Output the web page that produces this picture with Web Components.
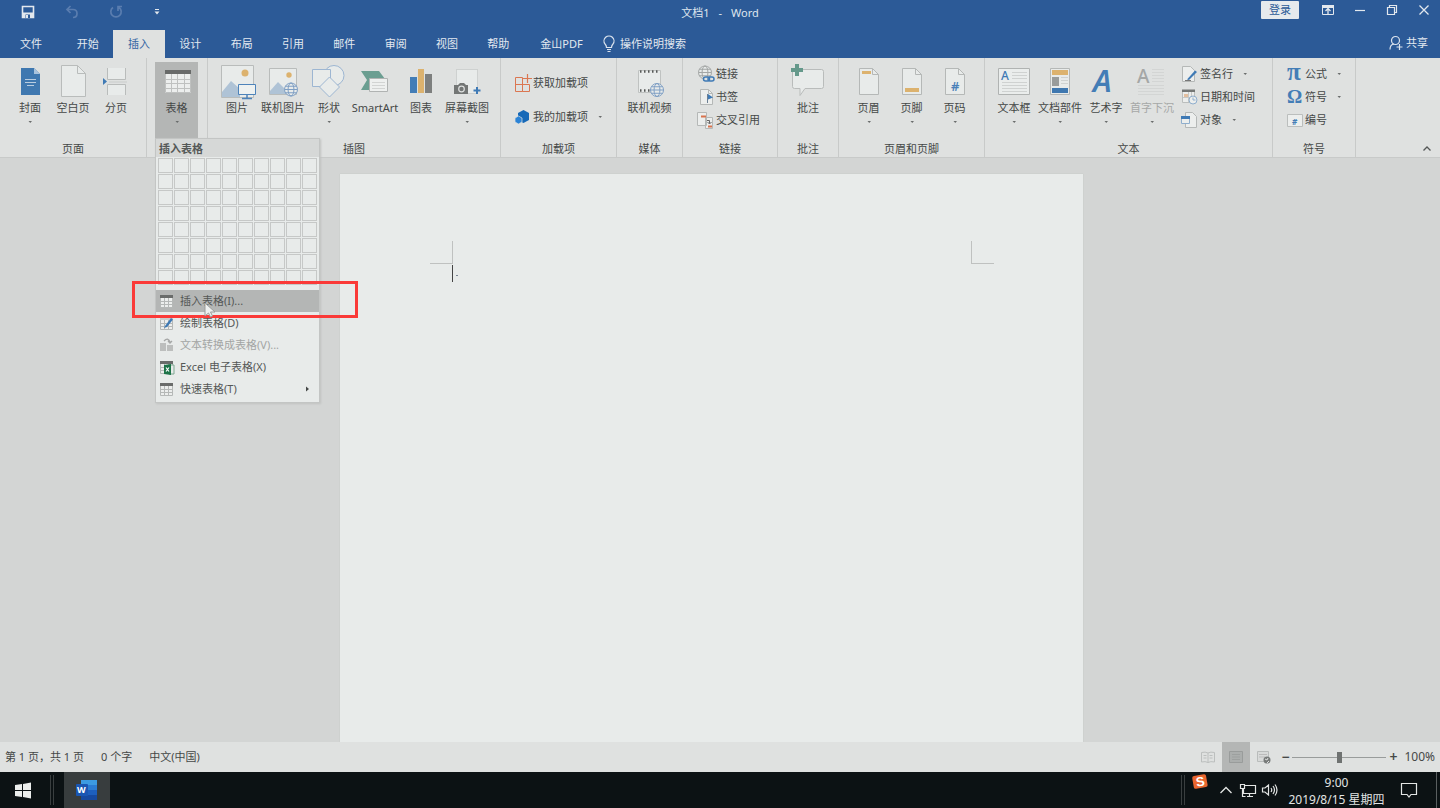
<!DOCTYPE html>
<html lang="zh-CN">
<head>
<meta charset="utf-8">
<title>文档1 - Word</title>
<style>
html, body { margin: 0; height: 100%; }
body { font: 11px/16px "Noto Sans", "Noto Sans CJK SC", sans-serif; color: #454847; overflow: hidden;
  --blue: #2c5a97; --ribbon: #dfe1e0; --canvas: #d3d5d4; --paper: #e8ebea; --line: #c8cac9; --accent: #3f7ab5; }
</style>
</head>
<body>
<word-app></word-app>
<script>
const globe = (x, y, r, c = '#7f9fc4') => `<g fill="#e8ebea" stroke="${c}"><circle cx="${x}" cy="${y}" r="${r}"/><ellipse cx="${x}" cy="${y}" rx="${r * .45}" ry="${r}" fill="none"/><path d="M${x - r} ${y}h${2 * r}M${x - r * .85} ${y - r * .5}h${r * 1.7}M${x - r * .85} ${y + r * .5}h${r * 1.7}" fill="none"/></g>`;
const sheet = '<path d="M10.5 4.5h13l6 6v20h-19z" fill="#e8ebea" stroke="#b5b8b7"/><path d="M23.5 4.5v6h6" fill="none" stroke="#b5b8b7"/>';
const miniTable = '<path d="M2 4h13v11H2z" fill="#eceeed"/><path d="M2.5 6v9.5h12V6M2 9.5h13M2 12.5h13M6.5 6v9M10.5 6v9" fill="none" stroke="#b5b8b7"/><path d="M2 3h13v3H2z" fill="#6a6c6b"/>';
const miniPage = '<path d="M3.500 1.500h8l4 4v11h-12z" fill="#eceeed" stroke="#b5b8b7"/><path d="M11.500 1.500v4h4" fill="none" stroke="#b5b8b7"/>';
const ICONS = {
  cover: [40, 36, '<path d="M11 4h13l6 6v21H11z" fill="#3f78b0"/><path d="M24 4v6h6z" fill="#a9c3dd"/><path d="M15 15.500h11M15 18.500h11M17 21.500h7" stroke="#b9cde0"/>'],
  blank: [40, 36, '<path d="M8.500 1.500h16l8 8v23h-24z" fill="#e8ebea" stroke="#b9bcbb"/><path d="M24.500 1.500v8h8" fill="none" stroke="#b9bcbb"/>'],
  break: [40, 36, '<path d="M11.500 4v11.500h18V4M11.500 31V20.500h18V31" fill="#e8ebea" stroke="#b9bcbb"/><path d="M13 18h18" stroke="#c9cccb"/><path d="M7 14l4 3.500-4 3.500z" fill="#3f7ab5"/>'],
  table: [40, 36, '<path d="M8 6h26v23H8z" fill="#eceeed"/><path d="M8.500 10v18.500h25V10M8 15.500h26M8 19.500h26M8 24.500h26M14.500 10v18M20.500 10v18M27.500 10v18" fill="none" stroke="#bfc1c0"/><path d="M8 6h26v4H8z" fill="#686a69"/>'],
  picture: [40, 36, '<path d="M4.500 1.500h32v32h-32z" fill="#e8ebea" stroke="#b9bcbb"/><circle cx="28" cy="9" r="3.500" fill="#dcb26e"/><path d="M5 33V28L14 17l9 8v8z" fill="#afc3d6"/><path d="M21.500 20.500h17v10h-17z" fill="#eef1f0" stroke="#4d83ba"/><path d="M30 31v3M25 34.500h10" stroke="#4d83ba" stroke-width="1.500"/>'],
  onlinepic: [40, 36, '<path d="M6.500 4.500h27v26h-27z" fill="#e8ebea" stroke="#b9bcbb"/><circle cx="26" cy="11" r="2.700" fill="#dcb26e"/><path d="M7 30v-3l8-9 8 8v4z" fill="#afc3d6"/>' + globe(28, 25.5, 6.5)],
  shapes: [40, 36, '<g fill="#e8ebea" stroke="#9db6d2"><circle cx="25" cy="11.500" r="10"/><path d="M3.500 5.500h18v17h-18z"/><path d="M20.500 13l10 10-10 10-10-10z"/></g>'],
  smartart: [40, 36, '<path d="M6 7h18l6 8v5H14v6H6l6-10z" fill="#6b9e91"/><path d="M14.500 14.500h18v13h-18z" fill="#eef0ef" stroke="#b0b3b2"/><path d="M17 18.500h13M17 21.500h13M17 24.500h13" stroke="#d2d4d3"/>'],
  chart: [40, 36, '<path d="M9 13h7v16H9z" fill="#437db6"/><path d="M17 5h6v24h-6z" fill="#dcb26e"/><path d="M24 10h7v19h-7z" fill="#7d7f7e"/>'],
  screenshot: [40, 36, '<path d="M9.500 5.500h21v24h-21z" fill="#e8ebea" stroke="#b9bcbb" stroke-dasharray="1 1"/><path d="M7 21h4l2-2h4l2 2h2v9H7z" fill="#737675"/><circle cx="14.500" cy="25" r="2.800" fill="none" stroke="#dfe1e0" stroke-width="1.200"/><path d="M30 23v7M26.500 26.500h7" stroke="#3f7ab5" stroke-width="2"/>'],
  video: [40, 36, '<path d="M8.500 6.500h22v22h-22z" fill="#e8ebea" stroke="#bfc2c1"/><path d="M10 7.500h20M10 26.500h12" stroke="#555857" stroke-width="2.500" stroke-dasharray="1.500 2.500"/>' + globe(27, 26, 6.5)],
  comment: [40, 36, '<path d="M6.500 5.500h27q2 0 2 2v15q0 2-2 2H17l-5 7v-7H6.500q-2 0-2-2v-15q0-2 2-2z" fill="#e8ebea" stroke="#b9bcbb"/><path d="M9 0v12M3 6h12" stroke="#65998b" stroke-width="4"/>'],
  header: [40, 36, sheet + '<path d="M13 7h9v3h-9z" fill="#dcb26e"/>'],
  footer: [40, 36, sheet + '<path d="M13 24h14v4H13z" fill="#dcb26e"/>'],
  pagenum: [40, 36, sheet + '<text x="16" y="27" font-size="13" font-weight="600" fill="#4a80b8">#</text>'],
  textbox: [40, 36, '<path d="M4.500 4.500h31v26h-31z" fill="#eaedec" stroke="#b0b3b2"/><path d="M18 8.500h15M18 11.500h15M18 14.500h15M8 18.500h25M8 21.500h25M8 24.500h25M8 27.500h25" stroke="#cfd2d1"/><text x="7" y="16" font-size="12" font-weight="500" fill="#3f7ab5">A</text>'],
  parts: [40, 36, '<path d="M10.500 4.500h19v26h-19z" fill="#e8ebea" stroke="#b5b8b7"/><path d="M12 6h16v5H12z" fill="#dcb26e"/><path d="M12 13h7v9h-7z" fill="#999c9b"/><path d="M21 13.500h7M21 16.500h7M21 19.500h7" stroke="#cfd2d1"/><path d="M12 24h16v5H12z" fill="#3f78b0"/>'],
  wordart: [40, 36, '<text x="7" y="28" font-size="31" font-style="italic" font-weight="600" fill="#437db6">A</text>'],
  dropcap: [40, 36, '<text x="5" y="19" font-size="19" font-weight="500" fill="#a5a7a6">A</text><path d="M20 5.500h12M20 8.500h12M20 11.500h12M20 14.500h12M20 17.500h12M6 21.500h26M6 24.500h26M6 27.500h26M6 30.500h26" stroke="#d3d5d4"/>'],
  getaddin: [18, 18, '<path d="M1.500 3.500h7v14h-7zM1.500 10.500h14v7h-7v-7" fill="none" stroke="#db7651"/><path d="M13.500 0v9M9 4.500h9" stroke="#db7651" stroke-width="1.200"/>'],
  myaddin: [18, 18, '<path d="M9.500 2l5.500 3v7l-5.500 3L4 12V5z" fill="#1669b8"/><path d="M4.500 8l3.500 2v4l-3.500 2L1 14v-4z" fill="#2b83d6" stroke="#dfe1e0" stroke-width=".7"/>'],
  link: [18, 18, globe(8, 7.5, 6.5, '#a3a6a5') + '<g fill="#dfe1e0" stroke="#3f7ab5" stroke-width="1.500"><rect x="6.500" y="12" width="6" height="4" rx="2"/><rect x="11" y="12" width="6" height="4" rx="2" fill="none"/></g>'],
  bookmark: [18, 18, miniPage + '<path d="M10.500 6v9" stroke="#6b7f93"/><path d="M11 6l5 3.500-5 2z" fill="#3f7ab5"/>'],
  xref: [18, 18, '<path d="M.500 1.500h9v13h-9zM8.500 6.500h7v11h-7z" fill="#eceeed" stroke="#b5b8b7"/><path d="M4 5.500h5M11 15.500h4" stroke="#d8734e" stroke-width="2"/><path d="M10 9.500h2.500v3m-2-1.500l2 2 2-2" fill="none" stroke="#666"/>'],
  sign: [18, 18, '<path d="M1.500 1.500h8l4 4v11h-12z" fill="#eceeed" stroke="#b5b8b7"/><path d="M6 14.500l8-9 2 1.500-8 8z" fill="#3f7ab5"/><path d="M4 15.500h6" stroke="#777"/>'],
  date: [18, 18, '<path d="M1.500 2.500h12v12h-12z" fill="#eceeed" stroke="#bbbebd"/><path d="M1 1.500h13v2.500H1z" fill="#747776"/><path d="M3 6h4v3H3z" fill="#e3bfa0"/><path d="M2 9.500h12M7.500 4v10M10.500 4v10" stroke="#c5c8c7"/><circle cx="12" cy="12" r="4" fill="#eceeed" stroke="#8faecd"/><path d="M12 9.500V12h2.500" fill="none" stroke="#8faecd"/>'],
  object: [18, 18, '<path d="M4.500 1.500h7l4 4v11h-11z" fill="#eceeed" stroke="#b5b8b7"/><path d="M0 5h9v8H0z" fill="#eceeed"/><path d="M.500 5.500h8v7h-8z" fill="none" stroke="#8faecd"/><path d="M0 5h9v3H0z" fill="#3f7ab5"/>'],
  pi: [18, 18, '<text class="serif" x="1" y="15" font-size="25" fill="#437db6">π</text>'],
  omega: [18, 18, '<text class="serif" x="1" y="15" font-size="19" fill="#437db6">Ω</text>'],
  number: [18, 18, '<path d="M1.500 3.500h15v12h-15z" fill="#eceeed" stroke="#bbbebd"/><text x="6" y="14" font-size="8" font-weight="700" font-style="italic" fill="#437db6">#</text>'],
  tbl: [18, 18, miniTable],
  draw: [18, 18, miniTable.replace('#6a6c6b', '#c9cccb') + '<path d="M7 12l6-8 2 1.500-6 7.500-3 1z" fill="#3f7ab5"/>'],
  convert: [18, 18, '<path d="M2 7h6v8H2zM9 9h6v6H9z" fill="#bcbebd"/><path d="M6 5q4-4 6 1m-2-1l2 2 2-2" fill="none" stroke="#a5a7a6" stroke-width="1.300"/>'],
  excel: [18, 18, miniTable + '<path d="M11 7h5v9h-5z" fill="#e8ebea" stroke="#7fa892"/><path d="M6 7l7-1v11l-7-1z" fill="#1c7348"/><path d="M8 9.500l3 4M11 9.500l-3 4" stroke="#fff" stroke-width="1.200"/>'],
  save: [14, 14, '<path d="M1.500 1.500h11v11h-11z" fill="none" stroke="#e3e8ee" stroke-width="1.600"/><path d="M2 7.500h10v5H2z" fill="#e3e8ee"/><path d="M4.500 9.500h4.500V13H4.500z" fill="#2c5a97"/><path d="M5 10h2v3H5z" fill="#e3e8ee"/>'],
  undo: [14, 14, '<path d="M5.500 1L2 4.500 5.500 8M2.500 4.500H8q4 0 4 4T8 12.500" fill="none" stroke="#5a7daf" stroke-width="1.700"/>'],
  redo: [14, 14, '<path d="M4 2.500A5.200 5.200 0 1 0 10 2.500M9 6V1.500h4" fill="none" stroke="#5a7daf" stroke-width="1.700"/>'],
  custom: [8, 8, '<path d="M2 1.500h4" stroke="#e3e8ee"/><path d="M1.500 3.500h5L4 6.500z" fill="#e3e8ee"/>'],
  ribbonopt: [14, 14, '<path d="M1.500 2.500h11v9h-11z" fill="none" stroke="#e3e8ee"/><path d="M1 2h12v3H1z" fill="#e3e8ee"/><path d="M7 11V6M4.500 8L7 5.500 9.500 8" fill="none" stroke="#e3e8ee" stroke-width="1.300"/>'],
  min: [14, 14, '<path d="M2 7.500h10" stroke="#e3e8ee" stroke-width="1.200"/>'],
  restore: [14, 14, '<path d="M2.500 4.500h7v7h-7zM4.500 4V2.500h7v7H10" fill="none" stroke="#e3e8ee" stroke-width="1.200"/>'],
  close: [14, 14, '<path d="M2.500 2.500l9 9M11.500 2.500l-9 9" stroke="#e3e8ee" stroke-width="1.300"/>'],
  person: [16, 16, '<circle cx="7.500" cy="5.500" r="4" fill="none" stroke="#dce4ee" stroke-width="1.200"/><path d="M2 14.500q0-5 4-5.500M11.500 9v6M8.500 12h6" fill="none" stroke="#dce4ee" stroke-width="1.200"/>'],
  bulb: [14, 18, '<path d="M4.500 12.500Q4.500 10.500 3 9a5 5 0 1 1 8 0Q9.500 10.500 9.500 12.500zM5 14.500h4M5.500 16.500h3" fill="none" stroke="#dce4ee" stroke-width="1.200"/>'],
  caret: [6, 4, '<path d="M1.500 1h3.500L3.250 3z" fill="#6a6d6c"/>'],
  up: [10, 8, '<path d="M1.500 5.500L5 2l3.500 3.500" fill="none" stroke="#555857" stroke-width="1.300"/>'],
  right: [6, 8, '<path d="M1 1.500l3 2.500-3 2.500z" fill="#454847"/>'],
  read: [14, 14, '<path d="M.500 2.500q4-1 6.500.500 2.500-1.500 6.500-.500v9.500q-4-1-6.500.500-2.500-1.500-6.500-.500zM7 3v10M2.500 5.500h3M2.500 8h3M8.500 5.500h3M8.500 8h3" fill="none" stroke="#bcbfbe"/>'],
  print: [14, 14, '<path d="M.500 1.500h13v11H.500z" fill="#abaead" stroke="#999c9b"/><path d="M3 4.500h8M3 7h8M3 9.500h8" stroke="#9da09f"/>'],
  web: [14, 14, '<path d="M.500 1.500h11v10H.500z" fill="#d8dad9" stroke="#b9bcbb"/><path d="M2 4.500h8M2 7h6" stroke="#bbb"/><circle cx="10" cy="10" r="3.500" fill="#777a79"/><path d="M8 9l2 1 1-2M10 13l2-2" stroke="#dfe1e0" fill="none"/>'],
  win: [18, 18, '<path d="M1 4l7-1v6H1zM9 3l8-1.500V9H9zM1 10h7v6l-7-1zM9 10h8v7.500L9 16z" fill="#eceeed"/>'],
  word: [24, 22, '<path d="M6 1h16v5H6z" fill="#3c9be2"/><path d="M6 6h16v5H6z" fill="#2b7cd3"/><path d="M6 11h16v5H6z" fill="#1d5fbe"/><path d="M6 16h16v5H6z" fill="#1649a0"/><rect x="1" y="5" width="12" height="12" rx="1" fill="#1a56b3"/><text x="2" y="14" font-size="9" font-weight="700" fill="#fff">W</text>'],
  sogou: [18, 18, '<g transform="rotate(-10 9 9)"><rect x="2" y="2" width="14" height="13" rx="2" fill="#e9662f"/><text class="sans" x="5" y="13" font-size="13" fill="#fff">S</text></g>'],
  tray: [14, 10, '<path d="M1.500 8L7 2.500 12.500 8" fill="none" stroke="#e3e5e4" stroke-width="1.300"/>'],
  net: [18, 14, '<path d="M5 2.500h11.500v8H4.500V6M8 13.500h6M10.500 11v2M1.500 1.500h4v4h-4zM3.500 6v7.500h3" fill="none" stroke="#e3e5e4" stroke-width="1.200"/>'],
  sound: [18, 14, '<path d="M1.500 5h2.500L7.500 2v10L4 9H1.500zM10 5q1.500 2 0 4M12 3q3 4 0 8M14 1.500q4 5.500 0 11" fill="none" stroke="#e3e5e4" stroke-width="1.200"/>'],
  notice: [16, 16, '<path d="M.500 1.500h15v11H10L8 15l-2-2.500H.500z" fill="none" stroke="#e3e5e4" stroke-width="1.200"/>'],
  pointer: [14, 18, '<path d="M2 1v13l3.500-3 2 4 2-1-2-4h4.500z" fill="#eef0ef" stroke="#9a9c9b"/>']
};

class Part extends HTMLElement {
  connectedCallback() {
    if (this.shadowRoot) return;
    const t = document.createElement('template');
    t.innerHTML = `<style>*{box-sizing:border-box}button{font:inherit;color:inherit;background:none;border:0;padding:0;margin:0}</style>` + this.view();
    this.attachShadow({ mode: 'open' }).append(t.content.cloneNode(true));
  }
  at(n, d = '') { return this.getAttribute(n) ?? d; }
}
const define = (name, view) => customElements.define(name, class extends Part { view() { return view(this); } });

define('ui-icon', el => {
  const [w, h, body] = ICONS[el.at('name')];
  return `<style>:host{display:block;flex:none}svg{display:block;overflow:visible}text{font-family:"Noto Sans",sans-serif}
  .serif{font-family:"Liberation Serif",serif;font-weight:700}.sans{font-family:"Liberation Sans",sans-serif;font-weight:700}</style>
  <svg width="${w}" height="${h}" viewBox="0 0 ${w} ${h}" aria-hidden="true">${body}</svg>`;
});

define('title-bar', () => `<style>
:host{display:grid;grid-template-columns:1fr auto 1fr;height:30px;background:var(--blue);color:#dfe6ee}
.quick{display:flex;align-items:center;gap:30px;padding:0 0 6px 21px}
h1{display:flex;gap:9px;margin:0;font:inherit;padding-top:5px}
.win{display:flex;justify-content:flex-end;align-items:flex-start;gap:18px;padding:1px 9px 0 0}
.win button{padding-top:2px}
.win .login{width:38px;height:18px;padding:0;margin-right:4px;border-radius:1px;background:#e6eaed;color:var(--blue);line-height:18px}
</style>
<div class="quick"><button aria-label="保存"><ui-icon name="save"></ui-icon></button><button aria-label="撤消"><ui-icon name="undo"></ui-icon></button><button aria-label="重复"><ui-icon name="redo"></ui-icon></button><button aria-label="自定义"><ui-icon name="custom"></ui-icon></button></div>
<h1><span>文档1</span><span>-</span><span>Word</span></h1>
<div class="win"><button class="login">登录</button><button aria-label="功能区选项"><ui-icon name="ribbonopt"></ui-icon></button><button aria-label="最小化"><ui-icon name="min"></ui-icon></button><button aria-label="还原"><ui-icon name="restore"></ui-icon></button><button aria-label="关闭"><ui-icon name="close"></ui-icon></button></div>`);

define('ribbon-tab', el => `<style>
:host{display:block}
button{width:100%;height:28px;color:#e3e9f0}
:host([active]) button{background:var(--ribbon);color:#3565a3}
</style><button role="tab"><slot></slot></button>`);

define('ribbon-tabs', () => `<style>
:host{display:flex;height:28px;background:var(--blue);color:#e3e9f0}
nav{display:grid;grid-template-columns:62px repeat(9,1fr) 75px;width:599px}
button{display:flex;align-items:center;gap:4px;height:28px}
.share{margin-left:auto;padding-right:12px;height:25px;gap:2px}.tell{padding-left:3px}
</style>
<nav role="tablist"><ribbon-tab>文件</ribbon-tab><ribbon-tab>开始</ribbon-tab><ribbon-tab active>插入</ribbon-tab><ribbon-tab>设计</ribbon-tab><ribbon-tab>布局</ribbon-tab><ribbon-tab>引用</ribbon-tab><ribbon-tab>邮件</ribbon-tab><ribbon-tab>审阅</ribbon-tab><ribbon-tab>视图</ribbon-tab><ribbon-tab>帮助</ribbon-tab><ribbon-tab>金山PDF</ribbon-tab></nav>
<button class="tell"><ui-icon name="bulb"></ui-icon>操作说明搜索</button>
<button class="share"><ui-icon name="person"></ui-icon>共享</button>`);

define('ribbon-group', el => `<style>
:host{display:flex;flex-direction:column;flex:none;padding-top:4px;border-right:1px solid var(--line)}
.body{display:flex;justify-content:center;height:76px;padding:0 8px}
:host([start]) .body{justify-content:flex-start}
:host([snug]) .body{justify-content:flex-start;padding:0 6px}
:host([roomy]) .body{padding:0 14px}
h2{margin:3px 0 0;font:inherit;text-align:center;height:16px}
</style><div class="body"><slot></slot></div><h2>${el.at('label')}</h2>`);

define('big-button', el => `<style>
:host{display:block;position:relative;width:46px;color:#454847}
:host([narrow]){width:43px}
button{display:flex;flex-direction:column;align-items:center;width:100%;height:76px;padding-top:2px;white-space:nowrap}
:host([pressed]) button{background:#b4b6b5}
:host([off]) button{color:#a6a8a7}
span{height:16px;margin-bottom:4px}
</style><button ${el.hasAttribute('off') ? 'disabled' : ''}><ui-icon name="${el.at('icon')}"></ui-icon><span>${el.at('label')}</span>${el.hasAttribute('menu') ? '<ui-icon name="caret"></ui-icon>' : ''}</button><slot></slot>`);

define('small-button', el => `<style>
:host{display:block}
button{display:flex;align-items:center;gap:1px;height:23px;white-space:nowrap}
:host([tall]) button{height:34px}
.more{margin-left:8px}
</style><button><ui-icon name="${el.at('icon')}"></ui-icon><slot></slot>${el.hasAttribute('menu') ? '<ui-icon class="more" name="caret"></ui-icon>' : ''}</button>`);

define('menu-item', el => `<style>
:host{display:block}
button{display:flex;align-items:center;gap:4px;width:100%;height:22px;padding:0 8px 0 2px;text-align:left;white-space:nowrap}
:host([selected]) button{background:#b4b6b5}
:host([off]) button{color:#a3a5a4}
.more{margin-left:auto}
</style><button role="menuitem" ${el.hasAttribute('off') ? 'disabled' : ''}><ui-icon name="${el.at('icon')}"></ui-icon><slot></slot>${el.hasAttribute('menu') ? '<ui-icon class="more" name="right"></ui-icon>' : ''}</button>`);

define('table-menu', () => `<style>
:host{position:absolute;z-index:5;left:0;top:100%;width:165px;padding-bottom:2px;background:var(--paper);border:1px solid #c3c5c4;box-shadow:1px 1px 2px #c0c2c1;color:#555857}
h3{margin:0;height:18px;padding-left:3px;font:inherit;font-weight:600;line-height:20px;background:#d6d8d7}
.size{display:grid;grid-template-columns:repeat(10,15px);grid-auto-rows:15px;gap:1px;padding:1px 2px 4px;height:133px;overflow:hidden}
.size button{border:1px solid #c6c8c7;background:var(--paper)}
.mark{position:absolute;left:-24px;top:142px;width:226px;height:37px;border:3px solid #fa3a38;pointer-events:none}
.pointer{position:absolute;left:47px;top:163px}
</style>
<h3>插入表格</h3>
<div class="size">${Array.from({ length: 80 }, (_, i) => `<button aria-label="${i % 10 + 1}x${Math.floor(i / 10) + 1}"></button>`).join('')}</div>
<div role="menu">
<menu-item icon="tbl" selected>插入表格(I)...</menu-item><menu-item icon="draw">绘制表格(D)</menu-item><menu-item icon="convert" off>文本转换成表格(V)...</menu-item><menu-item icon="excel">Excel 电子表格(X)</menu-item><menu-item icon="tbl" menu>快速表格(T)</menu-item>
</div><div class="mark"></div><ui-icon class="pointer" name="pointer"></ui-icon>`);

define('ribbon-bar', () => `<style>
:host{display:flex;background:var(--ribbon);border-bottom:1px solid var(--line);position:relative;z-index:2}
.pages{width:147px}.tables{width:61px}.art{width:293px}.addins{width:116px}.media{width:66px}.links{width:95px}.notes{width:61px}.hf{width:146px}.text{width:288px}.symbols{width:83px}
.addins .col{padding-top:4px}
.col{flex:1}.text .col{padding-left:6px}
.fold{margin:0 8px 4px auto;align-self:flex-end}
</style>
<ribbon-group class="pages" label="页面"><big-button narrow icon="cover" label="封面" menu></big-button><big-button narrow icon="blank" label="空白页"></big-button><big-button narrow icon="break" label="分页"></big-button></ribbon-group>
<ribbon-group class="tables" start label=""><big-button narrow pressed icon="table" label="表格" menu><table-menu></table-menu></big-button></ribbon-group>
<ribbon-group class="art" snug label="插图"><big-button icon="picture" label="图片"></big-button><big-button icon="onlinepic" label="联机图片"></big-button><big-button icon="shapes" label="形状" menu></big-button><big-button icon="smartart" label="SmartArt"></big-button><big-button icon="chart" label="图表"></big-button><big-button icon="screenshot" label="屏幕截图" menu></big-button></ribbon-group>
<ribbon-group class="addins" roomy label="加载项"><div class="col"><small-button tall icon="getaddin">获取加载项</small-button><small-button tall icon="myaddin" menu>我的加载项</small-button></div></ribbon-group>
<ribbon-group class="media" label="媒体"><big-button icon="video" label="联机视频"></big-button></ribbon-group>
<ribbon-group class="links" roomy label="链接"><div class="col"><small-button icon="link">链接</small-button><small-button icon="bookmark">书签</small-button><small-button icon="xref">交叉引用</small-button></div></ribbon-group>
<ribbon-group class="notes" label="批注"><big-button narrow icon="comment" label="批注"></big-button></ribbon-group>
<ribbon-group class="hf" label="页眉和页脚"><big-button narrow icon="header" label="页眉" menu></big-button><big-button narrow icon="footer" label="页脚" menu></big-button><big-button narrow icon="pagenum" label="页码" menu></big-button></ribbon-group>
<ribbon-group class="text" snug label="文本"><big-button icon="textbox" label="文本框" menu></big-button><big-button icon="parts" label="文档部件" menu></big-button><big-button icon="wordart" label="艺术字" menu></big-button><big-button off icon="dropcap" label="首字下沉" menu></big-button><div class="col"><small-button icon="sign" menu>签名行</small-button><small-button icon="date">日期和时间</small-button><small-button icon="object" menu>对象</small-button></div></ribbon-group>
<ribbon-group class="symbols" roomy label="符号"><div class="col"><small-button icon="pi" menu>公式</small-button><small-button icon="omega" menu>符号</small-button><small-button icon="number">编号</small-button></div></ribbon-group>
<button class="fold" aria-label="折叠功能区"><ui-icon name="up"></ui-icon></button>`);

define('doc-canvas', () => `<style>
:host{display:flex;justify-content:center;min-height:0;overflow:hidden;background:var(--canvas);padding:16px 17px 0 0}
article{width:743px;max-width:100%;background:var(--paper);padding:67px 89px 0 90px;box-shadow:0 0 1px #b9bbba}
.marks{display:flex;justify-content:space-between}
.marks i{width:23px;height:23px;border:0 solid #bfc1c0;border-bottom-width:1px}
.marks i:first-child{border-right-width:1px}.marks i:last-child{border-left-width:1px}
p{margin:1px 0 0 22px;height:17px;border-left:1px solid #444;display:flex;align-items:center}
p::after{content:"";width:2px;height:1px;margin:4px 0 0 3px;background:#7b8794}
</style><article><div class="marks"><i></i><i></i></div><p></p></article>`);

define('status-bar', () => `<style>
:host{display:flex;height:30px;background:var(--ribbon);align-items:center;padding:0 5px;gap:17px}
.views{display:flex;margin-left:auto;height:100%}
.views button{width:28px;display:grid;place-items:center}
.views .on{background:#b4b6b5}
.zoom{display:flex;align-items:center;gap:3px;margin-left:-14px}
.zoom button{width:8px;font-size:14px;font-weight:600}
input{appearance:none;width:94px;height:16px;margin:0;background:linear-gradient(#999c9b,#999c9b) center/100% 1px no-repeat}
input::-webkit-slider-thumb{appearance:none;width:5px;height:11px;background:#6f7271}
output{font-size:12px;margin-left:4px}
</style><span>第 1 页，共 1 页</span><span>0 个字</span><span>中文(中国)</span>
<div class="views"><button aria-label="阅读视图"><ui-icon name="read"></ui-icon></button><button class="on" aria-label="页面视图"><ui-icon name="print"></ui-icon></button><button aria-label="Web 版式"><ui-icon name="web"></ui-icon></button></div>
<div class="zoom"><button aria-label="缩小">−</button><input type="range" min="0" max="200" value="100" aria-label="缩放"><button aria-label="放大">+</button><output>100%</output></div>`);

define('task-bar', () => `<style>
:host{display:flex;height:36px;background:#0c1214;color:#e3e5e4;align-items:center;font-size:12px;line-height:17px}
button{display:grid;place-items:center;height:36px}
.start{width:46px}
.grip{width:4px;height:30px;border:solid #3a3f40;border-width:0 1px;margin:0 4px}
.start + .grip{margin:0 10px 0 4px}
.app{width:46px;background:#383d3e}
.right{display:flex;align-items:center;margin-left:auto}
.right button{width:22px}
.right .ime{height:20px;align-self:flex-start;margin-right:4px}
.clock{width:112px;text-align:center;margin-top:2px;padding-right:1px}
.right .note{width:32px}
.desk{height:36px;border-left:1px solid #5a5f60;margin-left:11px;width:4px}
</style>
<button class="start" aria-label="开始"><ui-icon name="win"></ui-icon></button><div class="grip"></div><button class="app" aria-label="Word"><ui-icon name="word"></ui-icon></button>
<div class="right"><div class="grip"></div><button class="ime" aria-label="输入法"><ui-icon name="sogou"></ui-icon></button><button aria-label="隐藏的图标"><ui-icon name="tray"></ui-icon></button><button aria-label="网络"><ui-icon name="net"></ui-icon></button><button aria-label="音量"><ui-icon name="sound"></ui-icon></button>
<time class="clock" datetime="2019-08-15T09:00"><div>9:00</div><div>2019/8/15 星期四</div></time><button class="note" aria-label="通知"><ui-icon name="notice"></ui-icon></button><div class="desk"></div></div>`);

define('word-app', () => `<style>:host{display:grid;grid-template-rows:auto auto auto minmax(0,1fr) auto auto;height:100vh}</style>
<title-bar></title-bar><ribbon-tabs></ribbon-tabs><ribbon-bar></ribbon-bar><doc-canvas></doc-canvas><status-bar></status-bar><task-bar></task-bar>`);
</script>
</body>
</html>
